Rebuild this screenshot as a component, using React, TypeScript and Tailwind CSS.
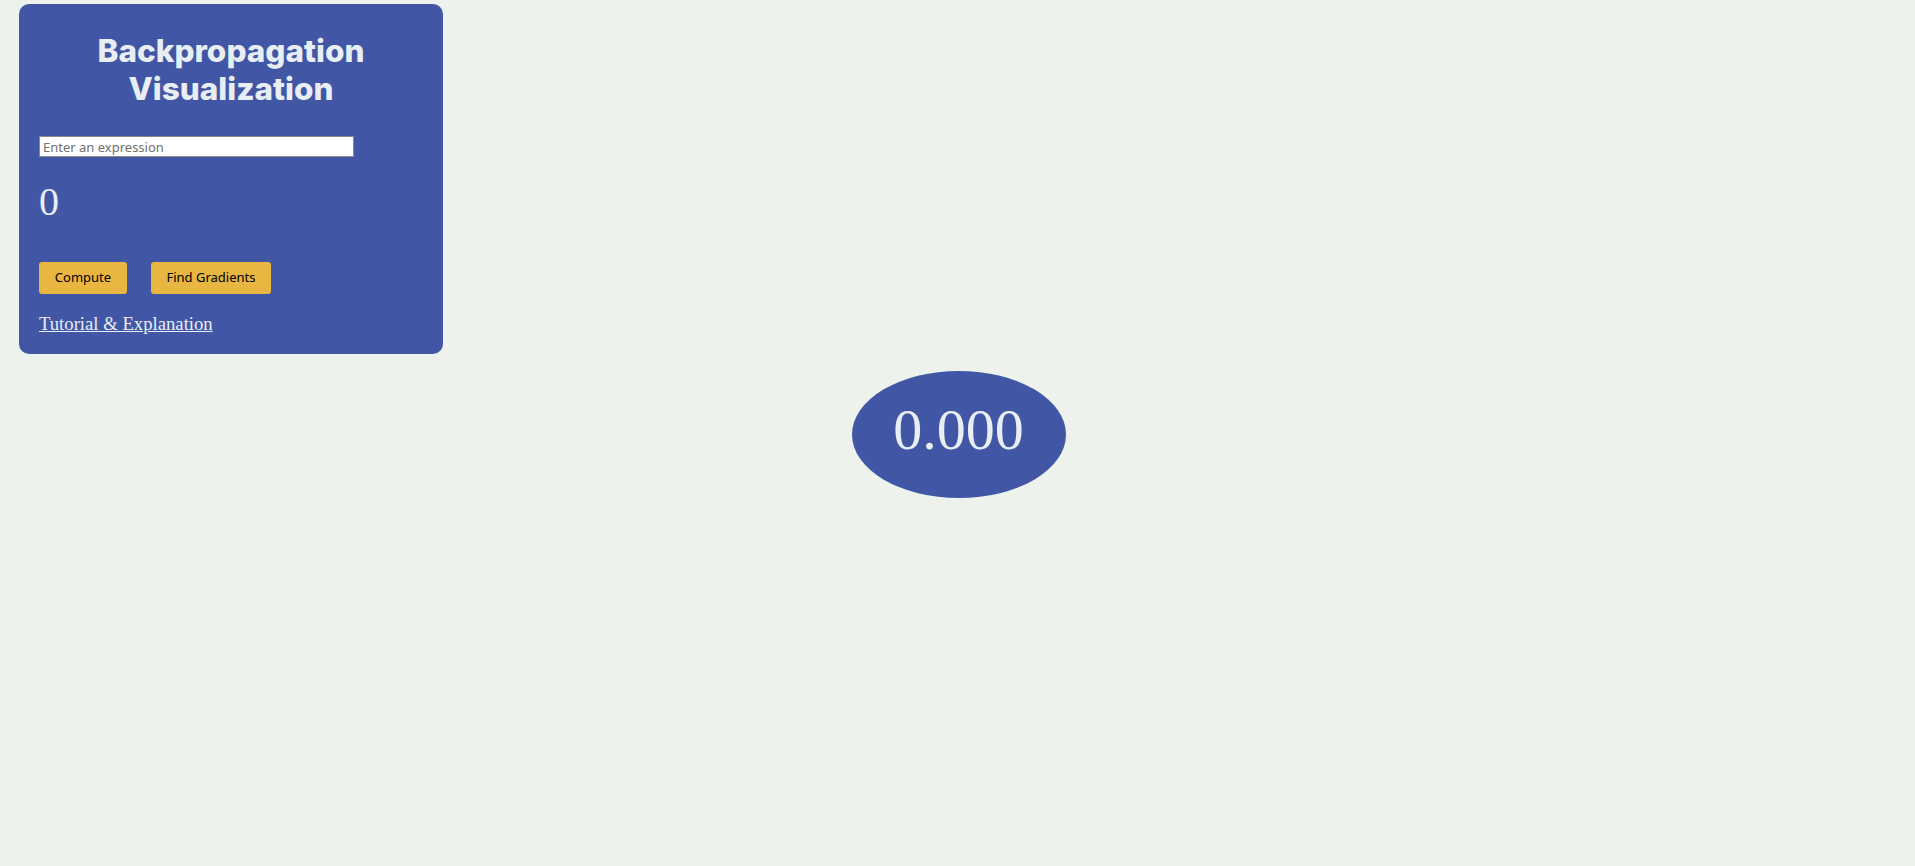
export default function App() {
  return (
    <div className="min-h-[866px] w-full bg-[#edf2ec]">
      <div className="flex flex-col">
        <div className="ml-[19px] mt-[4px] flex w-[424px] flex-col rounded-[10px] bg-[#4157a5] px-[20px] pb-[20px] pt-[28px]">
          <h1 className="text-center font-['Inter',sans-serif] text-[31.5px] font-extrabold leading-[38px] text-[#e8eef3]">
            Backpropagation
            <br />
            Visualization
          </h1>
          <input
            type="text"
            placeholder="Enter an expression"
            className="mt-[28px] h-[21px] w-[315px] border border-[#8a8a8a] bg-white px-[3px] font-['Noto_Sans',sans-serif] text-[13px] text-black placeholder:text-[#707070] outline-none"
          />
          <div className="mt-[22px] font-['Liberation_Serif',serif] text-[40px] leading-[46px] text-[#e8eef3]">
            0
          </div>
          <div className="mt-[37px] flex gap-[24px]">
            <button className="h-[32px] w-[88px] rounded-[3px] bg-[#e9b741] font-['Noto_Sans',sans-serif] text-[13px] text-black">
              Compute
            </button>
            <button className="h-[32px] w-[120px] rounded-[3px] bg-[#e9b741] font-['Noto_Sans',sans-serif] text-[13px] text-black">
              Find Gradients
            </button>
          </div>
          <a
            href="#"
            className="mt-[19px] self-start font-['Liberation_Serif',serif] text-[18.7px] leading-[21px] text-[#e8eef3] underline"
          >
            Tutorial &amp; Explanation
          </a>
        </div>
        <div className="mt-[17px] flex justify-center pl-[2px]">
          <div className="flex h-[127px] w-[214px] items-center justify-center rounded-[50%] bg-[#4157a5] pb-[10px] font-['Liberation_Serif',serif] text-[58px] leading-[64px] text-[#e8eef3]">
            0.000
          </div>
        </div>
      </div>
    </div>
  );
}
